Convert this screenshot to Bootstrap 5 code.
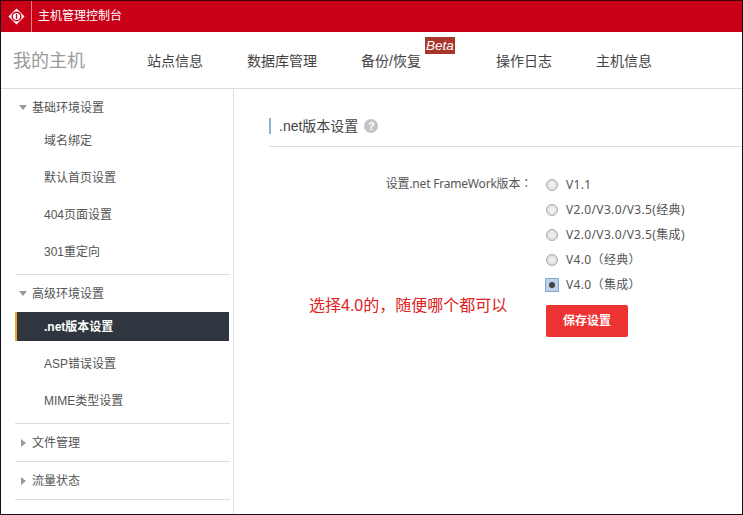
<!DOCTYPE html>
<html lang="zh">
<head>
<meta charset="utf-8">
<link href="https://cdn.jsdelivr.net/npm/bootstrap@5.3.0/dist/css/bootstrap.min.css" rel="stylesheet">
<style>
html,body{height:515px;overflow:hidden;}
body{font-family:"Liberation Sans","Noto Sans CJK SC",sans-serif;font-size:12px;color:#555;background:#fff;}
.shell{height:515px;border:1px solid #111;border-top-color:#400;display:flex;flex-direction:column;overflow:hidden;}
.topbar{height:31px;background:#c80018;color:#fff;flex:none;}
.logo-cell{width:31px;border-right:1px solid #e88;height:31px;}
.topbar-title{font-size:12px;padding-left:6px;padding-bottom:2px;}
.menubar{height:57px;flex:none;border-bottom:1px solid #ddd;padding-top:2px;}
.brandname{font-size:18px;color:#999;width:146px;padding-left:12px;}
.mainlink{font-size:14px;color:#444;width:114px;position:relative;}
.wa{width:100px;}
.wc{width:135px;}
.betatag{position:absolute;left:64px;top:-14px;background:#a8362c;color:#fff;font-style:italic;font-size:13.5px;line-height:17px;padding:0 1px;}
.bodyrow{flex:1;min-height:0;}
.sidepane{width:233px;border-right:1px solid #ddd;flex:none;padding:0 3px 0 14px;}
.grp{border-bottom:1px solid #ddd;}
.grphead{height:37px;font-size:12px;color:#555;}
.sublist{margin-top:-4px;padding-bottom:4px;}
.tri-d{width:0;height:0;border-left:4.5px solid transparent;border-right:4.5px solid transparent;border-top:5px solid #999;margin:0 5px 0 4px;}
.tri-r{width:0;height:0;border-top:4.5px solid transparent;border-bottom:4.5px solid transparent;border-left:5px solid #999;margin:0 6px 0 6px;}
.subitem{height:37px;padding-left:29px;color:#555;font-size:12px;}
.subitem.on{background:#2f3640;color:#fff;font-weight:700;height:29px;border-left:2px solid #f5a623;padding-left:27px;margin:4px 1px 4px 0;}
.sectitle{margin:23px 0 0 35px;height:35px;padding-bottom:6px;border-bottom:1px solid #ddd;}
.secbar{width:2px;height:16px;background:#8ab4d4;margin-right:8px;}
.sectext{font-size:14px;color:#444;}
.helpdot{width:14px;height:14px;border-radius:50%;background:#c4c4c4;color:#fff;font-size:11px;font-weight:700;margin-left:6px;}
.formrow{padding-top:25px;font-family:"Noto Sans","Noto Sans CJK TC",sans-serif;}
.formlabel{width:312px;text-align:right;color:#555;font-size:12px;padding-top:3px;padding-right:14px;letter-spacing:-.2px;}
.optrow{height:25px;color:#555;font-size:12px;letter-spacing:.35px;}
.radiodot{width:12px;height:12px;border-radius:50%;background:radial-gradient(circle,#eee 30%,#d0d0d0 100%);border:1px solid #aaa;margin-right:8px;flex:none;}
.radiobox{width:14px;height:14px;background:#bcd0ea;border:1px solid #8aa8d0;margin:0 7px 0 -1px;flex:none;}
.radiobox i{display:block;width:6px;height:6px;border-radius:50%;background:#444;}
.savebtn{background:#ee3333;color:#fff;font-weight:700;font-size:12px;width:82px;height:32px;border:0;border-radius:2px;margin-top:8px;padding:0;font-family:"Liberation Sans","Noto Sans CJK SC",sans-serif;}
.savebtn:hover{background:#ee3333;color:#fff;}
.redhint{position:absolute;left:308px;top:294px;color:#e02020;font-size:16px;line-height:22px;}
</style>
</head>
<body>
<div class="shell position-relative">
  <div class="topbar d-flex align-items-center">
    <div class="logo-cell d-flex align-items-center justify-content-center">
      <svg width="17" height="17" viewBox="0 0 18 18"><path d="M9 .5 17.500 9 9 17.500 .5 9Z" fill="#fff"/><circle cx="9" cy="9" r="4.600" fill="none" stroke="#c80018" stroke-width="1.600"/><path d="M9 6.500V11.500" stroke="#c80018" stroke-width="1.400"/></svg>
    </div>
    <div class="topbar-title">主机管理控制台</div>
  </div>
  <div class="menubar d-flex align-items-center">
    <div class="brandname">我的主机</div>
    <div class="d-flex">
      <div class="mainlink wa">站点信息</div>
      <div class="mainlink">数据库管理</div>
      <div class="mainlink wc">备份/恢复<span class="betatag">Beta</span></div>
      <div class="mainlink wa">操作日志</div>
      <div class="mainlink">主机信息</div>
    </div>
  </div>
  <div class="bodyrow d-flex">
    <div class="sidepane">
      <div class="grp">
        <div class="grphead d-flex align-items-center"><span class="tri-d"></span>基础环境设置</div>
        <div class="sublist">
          <div class="subitem d-flex align-items-center">域名绑定</div>
          <div class="subitem d-flex align-items-center">默认首页设置</div>
          <div class="subitem d-flex align-items-center">404页面设置</div>
          <div class="subitem d-flex align-items-center">301重定向</div>
        </div>
      </div>
      <div class="grp">
        <div class="grphead d-flex align-items-center"><span class="tri-d"></span>高级环境设置</div>
        <div class="sublist">
          <div class="subitem on d-flex align-items-center">.net版本设置</div>
          <div class="subitem d-flex align-items-center">ASP错误设置</div>
          <div class="subitem d-flex align-items-center">MIME类型设置</div>
        </div>
      </div>
      <div class="grp"><div class="grphead d-flex align-items-center"><span class="tri-r"></span>文件管理</div></div>
      <div class="grp"><div class="grphead d-flex align-items-center"><span class="tri-r"></span>流量状态</div></div>
    </div>
    <div class="flex-grow-1">
      <div class="sectitle d-flex align-items-center"><span class="secbar"></span><span class="sectext">.net版本设置</span><span class="helpdot d-flex align-items-center justify-content-center">?</span></div>
      <div class="formrow d-flex" lang="zh-Hant">
        <div class="formlabel">设置.net FrameWork版本：</div>
        <div>
          <div class="optrow d-flex align-items-center"><span class="radiodot"></span>V1.1</div>
          <div class="optrow d-flex align-items-center"><span class="radiodot"></span>V2.0/V3.0/V3.5(经典)</div>
          <div class="optrow d-flex align-items-center"><span class="radiodot"></span>V2.0/V3.0/V3.5(集成)</div>
          <div class="optrow d-flex align-items-center"><span class="radiodot"></span>V4.0（经典）</div>
          <div class="optrow d-flex align-items-center"><span class="radiobox d-flex align-items-center justify-content-center"><i></i></span>V4.0（集成）</div>
          <button class="btn savebtn" type="button">保存设置</button>
        </div>
      </div>
    </div>
  </div>
  <div class="redhint">选择4.0的，随便哪个都可以</div>
</div>
<script src="https://cdn.jsdelivr.net/npm/bootstrap@5.3.0/dist/js/bootstrap.bundle.min.js"></script>
</body>
</html>
